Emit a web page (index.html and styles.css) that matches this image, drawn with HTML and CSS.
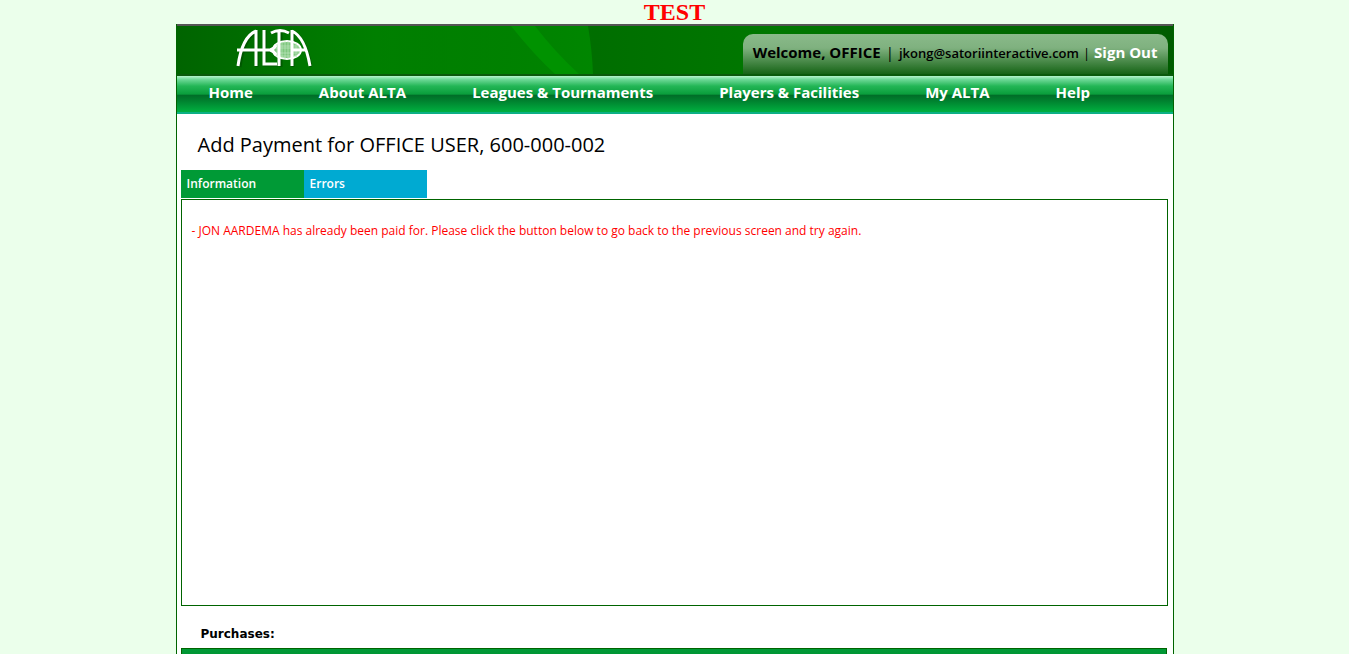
FILE: index.html
```html
<!DOCTYPE html>
<html lang="en">
<head>
<meta charset="utf-8">
<meta name="viewport" content="width=device-width, initial-scale=1">
<title>Add Payment - ALTA</title>
<link rel="stylesheet" href="styles.css">
</head>
<body>
<div class="env-label">TEST</div>
<div class="page">
  <header class="banner">
    <svg class="banner-art" viewBox="0 0 996 48" preserveAspectRatio="xMinYMin slice" aria-hidden="true">
      <defs>
        <linearGradient id="leaf" x1="0" x2="1" y1="0" y2="0">
          <stop offset="0" stop-color="#008200" stop-opacity="0"/>
          <stop offset="1" stop-color="#008600"/>
        </linearGradient>
      </defs>
      <path d="M60 0H411Q415 23 416 48H60Z" fill="url(#leaf)"/>
      <path d="M334 0H358Q378 26 402 48H378Q358 30 334 0Z" fill="#009200"/>
    </svg>
    <a class="logo" href="#" aria-label="ALTA">
      <svg width="76" height="42" viewBox="0 0 76 42" fill="none" aria-hidden="true">
        <g stroke="#004a00" stroke-opacity=".6" stroke-width="3" transform="translate(1 1)">
          <path d="M3 40Q7 11 20 5M20 4V40M2 24H37M28 4V38H41M44 5V40M36 6Q45 2 53 6M56 4V40M56 5Q69 11 74 40"/>
        </g>
        <ellipse cx="51" cy="24" rx="14" ry="9" fill="#7fc77f" stroke="#fff" stroke-width="2"/>
        <path d="M41 18V30M46 16V32M49 15V33M52 15V33M60 17V31M38 20H63M38 22H64M38 27H64M40 30H61" stroke="#bfe6bf" stroke-width=".7"/>
        <path d="M2 40Q6 11 20 5M20 4V40M1 24H34Q38 23 40 19M34 24Q38 25 40 29M28 4V38H41M43 5V40M35 7Q44 2 53 7M56 4V40M56 5Q69 11 74 40M56 24H69" stroke="#fff" stroke-width="3"/>
      </svg>
    </a>
    <div class="account">
      <span class="welcome">Welcome, OFFICE</span>
      <span class="welcome-bar">|</span>
      <span class="email">jkong@satoriinteractive.com</span>
      <span class="bar">|</span>
      <a class="signout" href="#">Sign Out</a>
    </div>
  </header>
  <nav class="menu">
    <a href="#">Home</a>
    <a href="#">About ALTA</a>
    <a href="#">Leagues &amp; Tournaments</a>
    <a href="#">Players &amp; Facilities</a>
    <a href="#">My ALTA</a>
    <a href="#">Help</a>
  </nav>
  <main class="content">
    <h1 class="title">Add Payment for OFFICE USER, 600-000-002</h1>
    <div class="tabs" role="tablist">
      <button class="tab" type="button" role="tab" aria-selected="false">Information</button>
      <button class="tab tab-current" type="button" role="tab" aria-selected="true">Errors</button>
    </div>
    <section class="panel" role="tabpanel">
      <p class="error">- JON AARDEMA has already been paid for. Please click the button below to go back to the previous screen and try again.</p>
    </section>
    <h2 class="subtitle">Purchases:</h2>
    <div class="list-head"></div>
  </main>
</div>
</body>
</html>
```
FILE: styles.css
```css
* { box-sizing: border-box; }
html { overflow: hidden; }
body {
  margin: 0;
  background: #ebffeb;
  color: #000;
  font-family: "Open Sans", "Noto Sans", sans-serif;
}
a { color: #fff; text-decoration: none; }

.env-label {
  color: #f00;
  font: bold 24px/24px "Liberation Serif", serif;
  text-align: center;
}

.page {
  max-width: 998px;
  margin: 0 auto;
  border: 1px solid #006400;
  border-width: 0 1px;
  background: #fff;
}

.banner {
  position: relative;
  display: flex;
  justify-content: space-between;
  align-items: flex-end;
  height: 52px;
  padding: 0 5px 0 59px;
  border-top: 2px solid #555;
  border-bottom: 2px solid #0a5a0c;
  background: linear-gradient(90deg, #006400, #007c00 20%, #006e00 42%, #007800 60%, #006800 85%, #005c00);
}
.banner-art {
  position: absolute;
  inset: 0;
  width: 100%;
  height: 100%;
}
.logo { position: relative; height: 48px; }
.logo svg { display: block; }

.account {
  position: relative;
  display: flex;
  align-items: baseline;
  height: 40px;
  padding: 0 10px;
  border-radius: 10px 10px 0 0;
  background: linear-gradient(#8aba8a, #7fb17f 35%, #166416);
  color: #000;
  font-size: 15px;
  font-weight: 700;
  line-height: 36px;
  white-space: nowrap;
}
.welcome-bar { margin: 0 5px; font-weight: 400; }
.email { font-size: 13px; font-weight: 600; }
.bar { margin: 0 4px; font-size: 13px; font-weight: 400; }

.menu {
  display: flex;
  gap: 66px;
  height: 38px;
  padding-left: 32px;
  border-bottom: 2px solid #0cb084;
  background: linear-gradient(#b4f5cc, #6cd896 10%, #23b656 28%, #0a9e3c 50%, #006e28 54%, #007a2c 64%, #00b040);
  font-size: 15px;
  font-weight: 700;
  line-height: 33px;
  white-space: nowrap;
}

.content { padding: 0 5px 0 4px; }
.title {
  margin: 0;
  padding: 16px 17px 10px;
  font-size: 20px;
  font-weight: 400;
  line-height: 30px;
}
.tabs { display: flex; }
.tab {
  width: 123px;
  height: 28px;
  padding: 0 6px;
  border: 0;
  background: #009a36;
  color: #fff;
  font: 600 12px/28px "Open Sans", "Noto Sans", sans-serif;
  text-align: left;
}
.tab-current { background: #00aad2; }
.panel {
  min-height: 407px;
  margin-top: 1px;
  padding: 21px 10px;
  border: 1px solid #006400;
}
.error {
  margin: 0;
  color: #f00;
  font-size: 12px;
  line-height: 20px;
}
.subtitle {
  margin: 0;
  padding: 18px 20px 4px;
  font: bold 12px/20px "DejaVu Sans", sans-serif;
}
.list-head {
  height: 24px;
  margin-right: 1px;
  border: 1px solid #006400;
  background: linear-gradient(#009a36, #00852c);
}
```
